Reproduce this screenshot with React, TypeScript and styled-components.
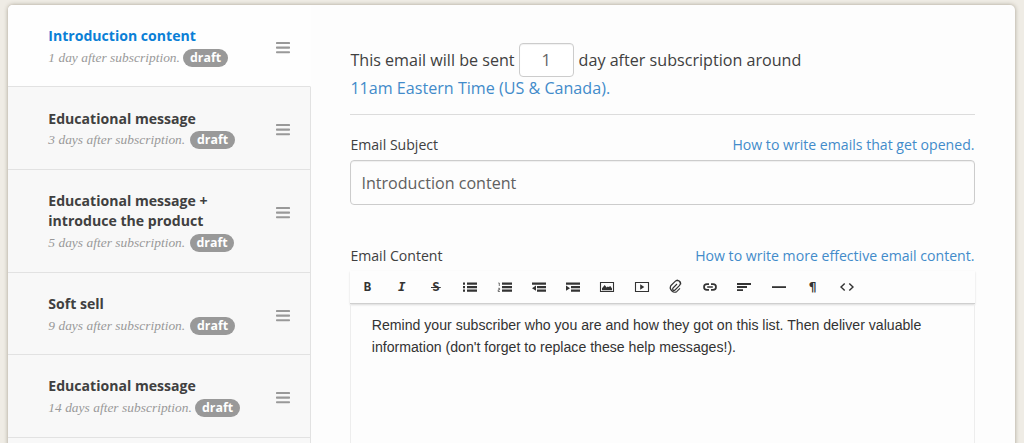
import React from "react";
import styled, { createGlobalStyle } from "styled-components";

const GlobalStyle = createGlobalStyle`
  *, *::before, *::after { box-sizing: border-box; }
  body {
    margin: 0;
    background: #efece5;
    color: #404040;
    font-family: "Open Sans", "Noto Sans", sans-serif;
    overflow: hidden;
  }
`;

const Page = styled.div`
  height: 443px;
  padding: 5px 9px 0 8px;
  overflow: hidden;
`;

const Card = styled.main`
  display: flex;
  height: 470px;
  background: #fdfdfd;
  border-radius: 5px;
  box-shadow: 0 0 4px rgba(90, 80, 55, 0.48);
  overflow: hidden;
`;

const Sidebar = styled.nav`
  flex: 0 0 303px;
  background: #f8f8f8;
`;

const Message = styled.div<{ $active?: boolean; $tall?: boolean }>`
  display: flex;
  justify-content: space-between;
  height: ${(p) => (p.$tall ? "102.9px" : "82.45px")};
  padding: 21.1px 20.5px 0 40.3px;
  border-bottom: 1px solid #e2e2e2;
  border-right: 1px solid ${(p) => (p.$active ? "transparent" : "#e2e2e2")};
  background: ${(p) => (p.$active ? "#fefefe" : "#f8f8f8")};
`;

const SidebarRest = styled.div`
  height: 40px;
  border-right: 1px solid #e2e2e2;
`;

const MessageTitle = styled.div<{ $active?: boolean }>`
  font-size: 14.08px;
  line-height: 20.4px;
  font-weight: 700;
  white-space: pre-line;
  color: ${(p) => (p.$active ? "#0a7fd6" : "#404040")};
`;

const Meta = styled.div`
  display: flex;
  align-items: center;
  gap: 4px;
  height: 20px;
  margin-top: 1.3px;
`;

const Timing = styled.span<{ $width: number }>`
  width: ${(p) => p.$width}px;
  font: italic 13.4px/20px Georgia, "Liberation Serif", serif;
  letter-spacing: 0.03px;
  color: #999;
  white-space: nowrap;
`;

const Badge = styled.span`
  width: 44.5px;
  height: 18px;
  border-radius: 9px;
  background: #999;
  color: #fff;
  font-size: 12.4px;
  line-height: 17px;
  font-weight: 700;
  text-align: center;
`;

const Handle = styled.span`
  width: 14px;
  height: 12px;
  margin-top: 15.7px;
  svg {
    display: block;
    fill: #999;
  }
`;

const Editor = styled.section`
  flex: 1;
  padding: 37px 40.5px 0 39.4px;
`;

const Schedule = styled.div`
  height: 73px;
  border-bottom: 1px solid #dcdcdc;
  font-size: 16.13px;
`;

const ScheduleLine = styled.div`
  display: flex;
  align-items: center;
  height: 35px;
  white-space: pre;
`;

const DayInput = styled.input`
  width: 55px;
  height: 34px;
  margin: 0 5px 0 4px;
  padding: 0;
  border: 1px solid #ccc;
  border-radius: 4px;
  background: #fff;
  box-shadow: inset 0 1px 1px rgba(0, 0, 0, 0.06);
  color: #666;
  font: 16.5px "Open Sans", sans-serif;
  text-align: center;
`;

const Link = styled.a`
  color: #428bca;
`;

const ZoneLink = styled(Link)`
  display: block;
  line-height: 22px;
`;

const FieldHead = styled.div`
  display: flex;
  justify-content: space-between;
  font-size: 14.1px;
  line-height: 20px;
`;

const SubjectHead = styled(FieldHead)`
  margin-top: 20px;
`;

const ContentHead = styled(FieldHead)`
  margin-top: 41px;
`;

const SubjectInput = styled.input`
  display: block;
  width: 100%;
  height: 45px;
  margin-top: 5px;
  padding: 1px 10px 0;
  border: 1px solid #ccc;
  border-radius: 4px;
  background: #fdfdfd;
  box-shadow: inset 0 1px 1px rgba(0, 0, 0, 0.06);
  color: #606060;
  font: 16.1px "Open Sans", sans-serif;
`;

const Toolbar = styled.div`
  display: flex;
  height: 33px;
  margin-top: 5px;
  background: #fdfdfd;
  border-bottom: 1px solid #cfcfcf;
  box-shadow: 0 1px 2px rgba(0, 0, 0, 0.14);
`;

const Tool = styled.button`
  display: grid;
  place-items: center;
  width: 34.25px;
  height: 32px;
  padding: 0;
  border: 0;
  background: none;
  color: #333;
  svg {
    display: block;
    width: 16px;
    height: 16px;
    overflow: visible;
  }
`;

const Glyph = styled.span<{ $italic?: boolean; $strike?: boolean }>`
  padding: 0 1px;
  font: ${(p) => (p.$italic ? "italic " : "")}700 12.5px/16px "DejaVu Sans Mono", monospace;
  background: ${(p) =>
    p.$strike ? "linear-gradient(currentColor, currentColor) center 8px / 100% 1px no-repeat" : "none"};
`;

const Body = styled.div`
  height: 180px;
  padding: 10px 20.4px;
  border: solid #ededed;
  border-width: 0 1px;
  font: 14.12px/22.4px "Liberation Sans", Arial, sans-serif;
  color: #333;
`;

const messages = [
  { title: "Introduction content", timing: "1 day after subscription.", width: 131, active: true },
  { title: "Educational message", timing: "3 days after subscription.", width: 138 },
  { title: "Educational message +\nintroduce the product", timing: "5 days after subscription.", width: 137.5, tall: true },
  { title: "Soft sell", timing: "9 days after subscription.", width: 138 },
  { title: "Educational message", timing: "14 days after subscription.", width: 143 },
];

const bars = (
  <path d="M5 3.5h10v2.2H5zM5 7h10v2.2H5zM5 10.5h10v2.2H5z" />
);

const icons: Record<string, React.ReactNode> = {
  unordered: <>{bars}<path d="M1 3.5h2v2.2H1zM1 7h2v2.2H1zM1 10.5h2v2.2H1z" /></>,
  ordered: (
    <>
      {bars}
      <path d="M1.3 4h1v3M1.2 9.3h1.4v1.5H1.2v1.7h1.7" fill="none" stroke="currentColor" strokeWidth=".7" />
    </>
  ),
  outdent: <path d="M1 3.5h14v2.2H1zM6 7h9v2.2H6zM6 10.5h9v2.2H6zM1 9.2l4-2.6v5.2z" />,
  indent: <path d="M1 3.5h14v2.2H1zM6 7h9v2.2H6zM6 10.5h9v2.2H6zM5 9.2L1 6.6v5.2z" />,
  image: (
    <>
      <path d="M1.5 3.5h13v9h-13z" fill="none" stroke="currentColor" strokeWidth="1.1" />
      <path d="M3 11.3V9.2L5.7 6l2 2.4 1-.9 1 .6L11.3 7 13 9.6v1.7z" />
    </>
  ),
  video: (
    <>
      <path d="M1.5 3.5h13v9h-13z" fill="none" stroke="currentColor" strokeWidth="1.1" />
      <path d="M6.2 5.2v5.6L10.3 8z" />
    </>
  ),
  file: (
    <path
      transform="rotate(45 8 8)"
      d="M6.6 5.2v5.6a1.4 1.4 0 0 0 2.8 0V4.6a3 3 0 0 0-6 0M3.4 4.6v6.2a4.3 3.7 0 0 0 8.4 0V6.2M3.4 4.6a3.4 3.4 0 0 1 6-2"
      fill="none" stroke="currentColor" strokeWidth="1.15"
    />
  ),
  link: (
    <path
      d="M7 10.9H4.9a2.9 2.9 0 0 1 0-5.8H7M9 5.1h2.1a2.9 2.9 0 0 1 0 5.8H9M5.2 8h5.6"
      fill="none" stroke="currentColor" strokeWidth="1.7"
    />
  ),
  align: <path d="M1 4h14v1.9H1zM1 7.1h10v1.9H1zM1 10.2h6v1.9H1z" />,
  rule: <path d="M1 7.2h14V9H1z" />,
  code: <path d="M5.7 4.4 2 8l3.7 3.6M10.3 4.4 14 8l-3.7 3.6" fill="none" stroke="currentColor" strokeWidth="1.4" />,
};

const tools: { name: string; glyph?: string; italic?: boolean; strike?: boolean }[] = [
  { name: "bold", glyph: "B" },
  { name: "italic", glyph: "I", italic: true },
  { name: "strike", glyph: "S", strike: true },
  { name: "unordered" },
  { name: "ordered" },
  { name: "outdent" },
  { name: "indent" },
  { name: "image" },
  { name: "video" },
  { name: "file" },
  { name: "link" },
  { name: "align" },
  { name: "rule" },
  { name: "paragraph", glyph: "¶" },
  { name: "code" },
];

export default function App() {
  return (
    <Page>
      <GlobalStyle />
      <Card>
        <Sidebar>
          {messages.map((m, i) => (
            <Message key={i} $active={m.active} $tall={m.tall}>
              <div>
                <MessageTitle $active={m.active}>{m.title}</MessageTitle>
                <Meta>
                  <Timing $width={m.width}>{m.timing}</Timing>
                  <Badge>draft</Badge>
                </Meta>
              </div>
              <Handle>
                <svg width="14" height="12" viewBox="0 0 14 12">
                  <rect width="14" height="2.1" rx=".7" />
                  <rect y="4.6" width="14" height="2.1" rx=".7" />
                  <rect y="9.2" width="14" height="2.1" rx=".7" />
                </svg>
              </Handle>
            </Message>
          ))}
          <SidebarRest />
        </Sidebar>
        <Editor>
          <Schedule>
            <ScheduleLine>
              <span>This email will be sent</span>
              <DayInput defaultValue="1" />
              <span>day after subscription around</span>
            </ScheduleLine>
            <ZoneLink>11am Eastern Time (US &amp; Canada).</ZoneLink>
          </Schedule>
          <SubjectHead>
            <span>Email Subject</span>
            <Link>How to write emails that get opened.</Link>
          </SubjectHead>
          <SubjectInput defaultValue="Introduction content" />
          <ContentHead>
            <span>Email Content</span>
            <Link>How to write more effective email content.</Link>
          </ContentHead>
          <Toolbar>
            {tools.map((t) => (
              <Tool key={t.name} type="button">
                {t.glyph ? (
                  <Glyph $italic={t.italic} $strike={t.strike}>{t.glyph}</Glyph>
                ) : (
                  <svg viewBox="0 0 16 16" fill="currentColor">{icons[t.name]}</svg>
                )}
              </Tool>
            ))}
          </Toolbar>
          <Body>
            Remind your subscriber who you are and how they got on this list. Then deliver valuable
            information (don't forget to replace these help messages!).
          </Body>
        </Editor>
      </Card>
    </Page>
  );
}
